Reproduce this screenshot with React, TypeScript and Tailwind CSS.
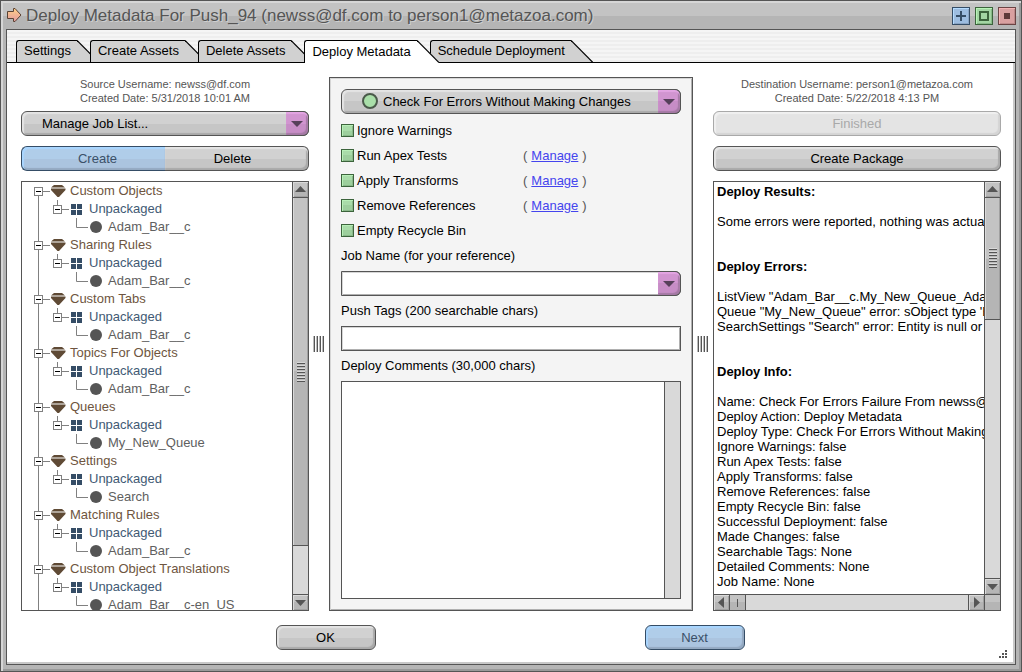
import React from "react";

type TreeGroup = { name: string; item: string };

const tree: TreeGroup[] = [
    {name: "Custom Objects", item: "Adam_Bar__c"},
    {name: "Sharing Rules", item: "Adam_Bar__c"},
    {name: "Custom Tabs", item: "Adam_Bar__c"},
    {name: "Topics For Objects", item: "Adam_Bar__c"},
    {name: "Queues", item: "My_New_Queue"},
    {name: "Settings", item: "Search"},
    {name: "Matching Rules", item: "Adam_Bar__c"},
    {name: "Custom Object Translations", item: "Adam_Bar__c-en_US"},
];

const tabs = ["Settings", "Create Assets", "Delete Assets", "Deploy Metadata", "Schedule Deployment"];

const options = [
    {id: "ignore", label: "Ignore Warnings", manage: false},
    {id: "apex", label: "Run Apex Tests", manage: true},
    {id: "transforms", label: "Apply Transforms", manage: true},
    {id: "references", label: "Remove References", manage: true},
    {id: "recycle", label: "Empty Recycle Bin", manage: false},
];

const report = [
    {
        title: "Deploy Results:",
        lines: ["Some errors were reported, nothing was actually"],
    },
    {
        title: "Deploy Errors:",
        lines: [
            "ListView \"Adam_Bar__c.My_New_Queue_Adam",
            "Queue \"My_New_Queue\" error: sObject type 'B",
            "SearchSettings \"Search\" error: Entity is null or",
        ],
    },
    {
        title: "Deploy Info:",
        lines: [
            "Name: Check For Errors Failure From newss@df.com",
            "Deploy Action: Deploy Metadata",
            "Deploy Type: Check For Errors Without Making",
            "Ignore Warnings: false",
            "Run Apex Tests: false",
            "Apply Transforms: false",
            "Remove References: false",
            "Empty Recycle Bin: false",
            "Successful Deployment: false",
            "Made Changes: false",
            "Searchable Tags: None",
            "Detailed Comments: None",
            "Job Name: None",
        ],
    },
];

const grayFace =
    "bg-[linear-gradient(#d1d1d1_50%,#c6c6c6_50%)] shadow-[inset_2px_2px_1px_#e4e4e4,inset_-2px_-2px_1px_#a9a9a9]";
const blueFace =
    "bg-[linear-gradient(#b0cde9_50%,#abc4df_50%)] shadow-[inset_2px_2px_1px_#a9d6ff,inset_-2px_-2px_1px_#94a9c1]";

const Tab: React.FC<{ label: string; active: boolean }> = ({label, active}) => (
    <button
        role="tab"
        aria-selected={active}
        className={"relative flex h-[23px] -mr-[9px] text-black " + (active ? "z-10" : "")}
    >
        <span
            className={"flex h-full items-center rounded-tl-[3px] border-l border-t border-black pl-[7px] pr-1.5 pb-px whitespace-nowrap " +
                (active ? "bg-white" : "border-b bg-[#d1d1d1]")}
        >
            {label}
        </span>
        <svg width="22" height="23" aria-hidden="true">
            <path d="M0 0 L22 22 V23 H0 Z" fill={active ? "#fff" : "#d1d1d1"}/>
            <path d="M0 0.5 L22 22.5" stroke="#000" strokeWidth="1.2"/>
            {!active && <path d="M0 22.5 H22" stroke="#000"/>}
        </svg>
    </button>
);

const ComboArrow: React.FC = () => (
    <span
        className="pointer-events-none absolute inset-y-0 right-0 flex w-[23px] items-center justify-center rounded-r-[6px] border border-l-0 border-[#555] bg-[linear-gradient(#d195d0_50%,#c78dc6_50%)] shadow-[inset_0_2px_1px_#e3a5e3,inset_-2px_-2px_1px_#a479a4]"
    >
        <svg width="12" height="6" aria-hidden="true">
            <path d="M0 0 H12 L6 6 Z" fill="#56405a"/>
        </svg>
    </span>
);

const arrowPaths = {
    up: "M2 10 L7.5 4 L13 10 Z",
    down: "M2 5 L7.5 11 L13 5 Z",
    left: "M10 2 L4 7.5 L10 13 Z",
    right: "M5 2 L11 7.5 L5 13 Z",
};

const ArrowButton: React.FC<{ dir: keyof typeof arrowPaths }> = ({dir}) => (
    <button
        aria-label={"Scroll " + dir}
        className="flex size-[15px] shrink-0 bg-[linear-gradient(#c3c3c3_50%,#b5b5b5_50%)] shadow-[inset_1px_1px_#dadada,inset_-1px_-1px_#a0a0a0]"
    >
        <svg width="15" height="15" aria-hidden="true">
            <path d={arrowPaths[dir]} fill="#555"/>
        </svg>
    </button>
);

const VerticalBar: React.FC<{ thumb: number }> = ({thumb}) => (
    <div className="flex w-4 shrink-0 flex-col border-l border-[#555] bg-[#d9d9d9]">
        <ArrowButton dir="up"/>
        <div className="flex min-h-0 flex-1 flex-col border-y border-[#555]">
            <div
                className="flex items-center justify-center border-b border-[#555] bg-[linear-gradient(90deg,#dadada_1px,transparent_1px_14px,#a0a0a0_14px),linear-gradient(#c3c3c3_50%,#b5b5b5_50%)]"
                style={{height: thumb + "%"}}
            >
                <span className="h-5 w-2 bg-[repeating-linear-gradient(#dadada_0_1px,#555_1px_2px,#bbb_2px_3px)]"/>
            </div>
        </div>
        <ArrowButton dir="down"/>
    </div>
);

const Grip: React.FC = () => (
    <div className="flex items-center justify-center">
        <span
            className="h-4 w-3 cursor-col-resize bg-[repeating-linear-gradient(90deg,#bbb_0_1px,#555_1px_2px,#fff_2px_3px)]"/>
    </div>
);

const ExpandBox: React.FC<{ x: number }> = ({x}) => (
    <>
        <rect x={x - 4 + 0.5} y="5.5" width="8" height="8" fill="#fff" stroke="#808080"/>
        <path d={`M${x - 2} 9.5 h5`} stroke="#000"/>
    </>
);

const TreeNode: React.FC<{ group: TreeGroup; first: boolean }> = ({group, first}) => (
    <li>
        <div className="flex h-[18px] items-center text-[#6e5540]">
            <svg className="mr-px shrink-0" width="47" height="18" aria-hidden="true">
                <path d={first ? "M16.5 9 V18" : "M16.5 0 V18"} stroke="#808080"/>
                <path d="M20 9.5 H28" stroke="#808080"/>
                <ExpandBox x={16}/>
                <path d="M32 3 H40 L43 5.5 H29 Z M29 6.5 H43.5 V8 L37 15 H35.5 L29 8 Z" fill="#5f4a35"/>
            </svg>
            {group.name}
        </div>
        <div className="flex h-[18px] items-center text-[#425a74]">
            <svg className="mr-1 shrink-0" width="63" height="18" aria-hidden="true">
                <path d="M16.5 0 V18 M35.5 0 V5 M39 9.5 H47" stroke="#808080"/>
                <ExpandBox x={35}/>
                <path d="M49 4 h5 v5 h-5 Z M55 4 h5 v5 h-5 Z M49 10 h5 v5 h-5 Z M55 10 h5 v5 h-5 Z" fill="#354d66"/>
            </svg>
            Unpackaged
        </div>
        <div className="flex h-[18px] items-center text-[#606060]">
            <svg className="mr-1 shrink-0" width="82" height="18" aria-hidden="true">
                <path d="M16.5 0 V18 M54.5 0 V9.5 H66" fill="none" stroke="#808080"/>
                <circle cx="74" cy="9" r="6" fill="#555"/>
            </svg>
            {group.item}
        </div>
    </li>
);

const windowButton = "flex size-[18px] items-center justify-center border";

const App: React.FC = () => {
    return (
        <div
            className="flex h-screen flex-col border border-[#555] bg-[#b5b5b5] px-[5px] pb-1.5 font-['Liberation_Sans',Arial,sans-serif] text-[13px] text-black shadow-[inset_2px_2px_#d6d6d6,inset_-2px_-2px_#999]">
            {/* Title bar */}
            <header
                className="-mx-[3px] mt-0.5 flex h-[26px] shrink-0 items-center bg-[linear-gradient(#c3c3c3_50%,#b5b5b5_50%)] px-[3px]">
                <svg className="mr-1 shrink-0" width="16" height="16" aria-hidden="true">
                    <defs>
                        <linearGradient id="arrow" x1="0" y1="0" x2="0" y2="1">
                            <stop offset="0" stopColor="#ffcf86"/>
                            <stop offset="1" stopColor="#e39aa0"/>
                        </linearGradient>
                    </defs>
                    <path d="M1.5 3.5 H7.5 V0.5 H9 L15 7 L9 13.5 H7.5 V10.5 H1.5 Z" fill="url(#arrow)"
                          stroke="#5b4334"/>
                </svg>
                <h1 className="min-w-0 flex-1 truncate text-[17px] leading-6 text-[#555] [text-shadow:1px_1px_#d0d0d0]">
                    Deploy Metadata For Push_94 (newss@df.com to person1@metazoa.com)
                </h1>
                <div className="flex gap-[5px]">
                    <button aria-label="Add"
                            className={windowButton + " border-[#354d66] bg-[#9dbde0] shadow-[inset_1px_1px_#b5dcff,inset_-1px_-1px_#8aa5c4]"}>
                        <svg width="10" height="10" aria-hidden="true">
                            <path d="M5 0 V10 M0 5 H10" stroke="#354d66" strokeWidth="2"/>
                        </svg>
                    </button>
                    <button aria-label="Maximize"
                            className={windowButton + " border-[#3c643c] bg-[#a3d6a3] shadow-[inset_1px_1px_#b8f5b8,inset_-1px_-1px_#88b888]"}>
                        <span className="size-[10px] border-2 border-[#3c643c]"/>
                    </button>
                    <button aria-label="Close"
                            className={windowButton + " border-[#6b4444] bg-[#d9a0a0] shadow-[inset_1px_1px_#f3b4b4,inset_-1px_-1px_#bd8a8a]"}>
                        <span className="size-1.5 bg-[#5e3838]"/>
                    </button>
                </div>
            </header>

            <div className="flex min-h-0 flex-1 flex-col border border-[#555] bg-white">
                {/* Tabs */}
                <div
                    className="flex h-[33px] shrink-0 items-end bg-[repeating-linear-gradient(#f5f5f5_0_2px,#eeeeee_2px_4px)] pl-[9px] shadow-[inset_0_-1px_#000]"
                    role="tablist">
                    {tabs.map((tab) => (
                        <Tab key={tab} label={tab} active={tab === "Deploy Metadata"}/>
                    ))}
                </div>

                <main
                    className="grid min-h-0 flex-1 grid-cols-[minmax(0,72fr)_20px_minmax(0,91fr)_20px_minmax(0,72fr)] px-3.5 pt-3.5 shadow-[inset_-2px_0_#c8c8c8]">
                    {/* Source */}
                    <section className="flex min-h-0 flex-col">
                        <div className="mb-1.5 text-center text-[11px] leading-[14px] text-[#555]">
                            <p>Source Username: newss@df.com</p>
                            <p>Created Date: 5/31/2018 10:01 AM</p>
                        </div>
                        <div className="relative mb-2.5 h-[25px] shrink-0">
                            <select aria-label="Job list"
                                    className={"h-full w-full appearance-none rounded-[6px] border border-[#555] pl-5 " + grayFace}>
                                <option>Manage Job List...</option>
                            </select>
                            <ComboArrow/>
                        </div>
                        <div className="mb-2.5 flex h-[25px] shrink-0">
                            <button
                                className="w-1/2 rounded-l-[6px] border border-r-0 border-[#354d66] bg-[linear-gradient(#b0cde9_50%,#abc4df_50%)] pl-2 text-[#3b5068] shadow-[inset_2px_2px_1px_#a9d6ff,inset_0_-2px_1px_#94a9c1]">
                                Create
                            </button>
                            <button
                                className="w-1/2 rounded-r-[6px] border border-l-0 border-[#555] bg-[linear-gradient(#d1d1d1_50%,#c6c6c6_50%)] pr-2 shadow-[inset_0_2px_1px_#e4e4e4,inset_-2px_-2px_1px_#a9a9a9]">
                                Delete
                            </button>
                        </div>
                        <div className="flex min-h-0 flex-1 border border-[#555] bg-white">
                            <ul className="min-w-0 flex-1 overflow-hidden whitespace-nowrap">
                                {tree.map((group, i) => (
                                    <TreeNode key={group.name} group={group} first={i === 0}/>
                                ))}
                            </ul>
                            <VerticalBar thumb={88}/>
                        </div>
                    </section>

                    <Grip/>

                    {/* Deploy options */}
                    <section
                        className="flex min-h-0 flex-col border border-[#555] bg-[#f4f4f4] p-[11px] shadow-[inset_1px_1px_#d6d6d6,inset_-1px_-1px_#b0b0b0]">
                        <div className="relative mb-1 h-[25px] shrink-0">
                            <select aria-label="Deploy action"
                                    className={"h-full w-full appearance-none rounded-[6px] border border-[#555] pl-[41px] " + grayFace}>
                                <option>Check For Errors Without Making Changes</option>
                            </select>
                            <span
                                className="pointer-events-none absolute left-[21px] top-1 size-4 rounded-full border-2 border-[#4a5a4a] bg-[#a9dfa9]"/>
                            <ComboArrow/>
                        </div>
                        {options.map((option) => (
                            <div key={option.id} className="flex h-[25px] shrink-0 items-center">
                                <label className="flex w-[182px] items-center gap-[3px]">
                                    <input
                                        type="checkbox"
                                        className="size-[13px] shrink-0 appearance-none border border-[#3c643c] bg-[linear-gradient(#a9dca9_50%,#9dcf9d_50%)] shadow-[inset_1px_1px_#b8f0b8,inset_-1px_-1px_#8ab88a]"
                                    />
                                    {option.label}
                                </label>
                                {option.manage && (
                                    <span className="flex gap-1 text-[#555]">
                                        (<a href="#manage" className="text-[#4444ee] underline">Manage</a>)
                                    </span>
                                )}
                            </div>
                        ))}
                        <label htmlFor="job" className="flex h-7 shrink-0 items-center pb-0.5">
                            Job Name (for your reference)
                        </label>
                        <div className="relative h-[25px] shrink-0">
                            <input id="job"
                                   className="h-full w-full rounded-r-[6px] border border-[#555] bg-white px-1 shadow-[inset_1px_1px_#d6d6d6,inset_-1px_-1px_#b0b0b0]"/>
                            <ComboArrow/>
                        </div>
                        <label htmlFor="tags" className="flex h-[30px] shrink-0 items-center">
                            Push Tags (200 searchable chars)
                        </label>
                        <input id="tags"
                               className="h-[25px] shrink-0 border border-[#555] bg-white px-1 shadow-[inset_1px_1px_#d6d6d6,inset_-1px_-1px_#b0b0b0]"/>
                        <label htmlFor="comments" className="flex h-[30px] shrink-0 items-center">
                            Deploy Comments (30,000 chars)
                        </label>
                        <div className="flex min-h-0 flex-1 border border-[#555]">
                            <textarea id="comments" className="min-w-0 flex-1 resize-none bg-white p-1"/>
                            <div className="w-4 shrink-0 border-l border-[#555] bg-[#d9d9d9]"/>
                        </div>
                    </section>

                    <Grip/>

                    {/* Destination */}
                    <section className="flex min-h-0 flex-col">
                        <div className="mb-1.5 text-center text-[11px] leading-[14px] text-[#555]">
                            <p>Destination Username: person1@metazoa.com</p>
                            <p>Created Date: 5/22/2018 4:13 PM</p>
                        </div>
                        <button disabled
                                className="mb-2.5 h-[25px] shrink-0 rounded-[6px] border border-[#a9a9a9] bg-[#e4e4e4] text-[#a9a9a9] shadow-[inset_2px_2px_1px_#f0f0f0,inset_-2px_-2px_1px_#d4d4d4]">
                            Finished
                        </button>
                        <button
                            className={"mb-2.5 h-[25px] shrink-0 rounded-[6px] border border-[#555] " + grayFace}>
                            Create Package
                        </button>
                        <div className="flex min-h-0 flex-1 flex-col border border-[#555] bg-white">
                            <div className="flex min-h-0 flex-1">
                                <div
                                    className="min-w-0 flex-1 overflow-hidden whitespace-nowrap pl-[3px] pt-0.5 leading-[15px]">
                                    {report.map((part) => (
                                        <div key={part.title} className="mb-[30px]">
                                            <h2 className="mb-[15px] font-bold">{part.title}</h2>
                                            {part.lines.map((line) => (
                                                <p key={line}>{line}</p>
                                            ))}
                                        </div>
                                    ))}
                                </div>
                                <VerticalBar thumb={32}/>
                            </div>
                            <div className="flex h-4 shrink-0 border-t border-[#555] bg-[#d9d9d9]">
                                <ArrowButton dir="left"/>
                                <div className="flex flex-1 border-x border-[#555]">
                                    <div
                                        className="flex w-4 items-center justify-center border-r border-[#555] bg-[linear-gradient(#c3c3c3_50%,#b5b5b5_50%)]">
                                        <span className="h-2 w-px bg-[#555]"/>
                                    </div>
                                </div>
                                <ArrowButton dir="right"/>
                                <div className="w-4 border-l border-[#555] bg-[linear-gradient(#c3c3c3_50%,#b5b5b5_50%)]"/>
                            </div>
                        </div>
                    </section>
                </main>

                {/* Footer */}
                <footer
                    className="relative flex shrink-0 justify-center gap-[269px] py-3.5 pr-0.5 shadow-[inset_-2px_-2px_#c8c8c8]">
                    <button className={"h-[25px] w-[100px] rounded-[6px] border border-[#555] " + grayFace}>OK</button>
                    <button
                        className={"h-[25px] w-[100px] rounded-[6px] border border-[#354d66] text-[#3b5068] " + blueFace}>
                        Next
                    </button>
                    <svg className="absolute bottom-1.5 right-2" width="8" height="8" aria-hidden="true">
                        <path
                            d="M6 0 h2 v2 h-2 Z M3 3 h2 v2 h-2 Z M6 3 h2 v2 h-2 Z M0 6 h2 v2 h-2 Z M3 6 h2 v2 h-2 Z M6 6 h2 v2 h-2 Z"
                            fill="#555"/>
                    </svg>
                </footer>
            </div>
        </div>
    );
};

export default App;
